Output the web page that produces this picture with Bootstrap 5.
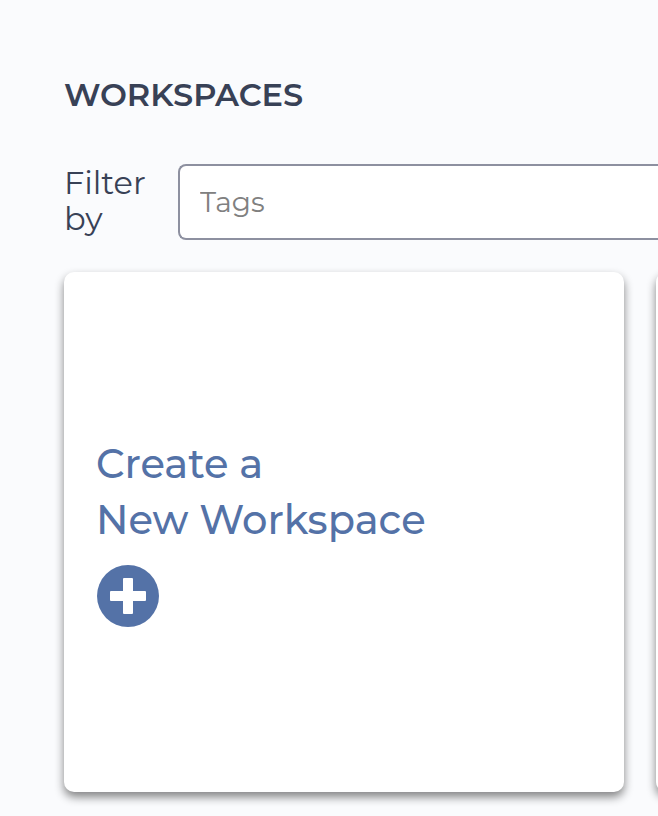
<!DOCTYPE html>
<html lang="en">
<head>
<meta charset="utf-8">
<meta name="viewport" content="width=device-width, initial-scale=1">
<title>Workspaces</title>
<link href="https://cdn.jsdelivr.net/npm/bootstrap@5.3.0/dist/css/bootstrap.min.css" rel="stylesheet">
<style>
body { background: #fafbfd; color: #384156; font-family: Montserrat, Inter, sans-serif; height: 816px; -webkit-font-smoothing: antialiased; }
.page-wrap { padding: 76px 0 0 64px; }
.page-title { font-size: 32px; line-height: 38px; font-weight: 600; margin-bottom: 50px; }
.filter-row { height: 76px; margin-bottom: 32px; }
.filter-label { width: 114px; font-size: 32px; line-height: 36px; padding-top: 1px; }
.filter-input, .filter-input:focus { height: 76px; border: 2px solid #8d90a0; border-right: 0; border-radius: 8px 0 0 8px; padding: 0 20px; font-size: 28px; background: #fff; }
.filter-input::placeholder { color: #808080; }
.card-strip { gap: 32px; margin: -20px 0 0 -20px; padding: 20px 0 24px 20px; }
.workspace-card { width: 560px; height: 520px; border: 0; border-radius: 10px; box-shadow: 0 5px 10px rgba(0,0,0,.48); }
.create-card { padding-left: 32px; }
.create-link { color: #5472a7; font-size: 40px; line-height: 56px; font-weight: 500; }
.create-icon { width: 62px; height: 62px; margin: 17px 0 2px 1px; }
</style>
</head>
<body class="overflow-hidden">
<main class="page-wrap">
  <h1 class="page-title">WORKSPACES</h1>
  <div class="filter-row d-flex">
    <label class="filter-label flex-shrink-0" for="tags">Filter<br>by</label>
    <input class="filter-input form-control flex-grow-1" id="tags" type="text" placeholder="Tags">
  </div>
  <div class="d-flex overflow-hidden card-strip">
    <a class="workspace-card create-card card flex-shrink-0 justify-content-center align-items-start text-decoration-none" href="#">
      <span class="create-link">Create a<br>New Workspace</span>
      <svg class="create-icon" viewBox="0 0 62 62" aria-hidden="true"><circle cx="31" cy="31" r="31" fill="#5472a7"/><path fill="#fff" d="M27 13h8q1 0 1 1v12h12q1 0 1 1v8q0 1-1 1H36v12q0 1-1 1h-8q-1 0-1-1V36H14q-1 0-1-1v-8q0-1 1-1h12V14q0-1 1-1z"/></svg>
    </a>
    <div class="workspace-card card flex-shrink-0"></div>
  </div>
</main>
<script src="https://cdn.jsdelivr.net/npm/bootstrap@5.3.0/dist/js/bootstrap.bundle.min.js"></script>
</body>
</html>
